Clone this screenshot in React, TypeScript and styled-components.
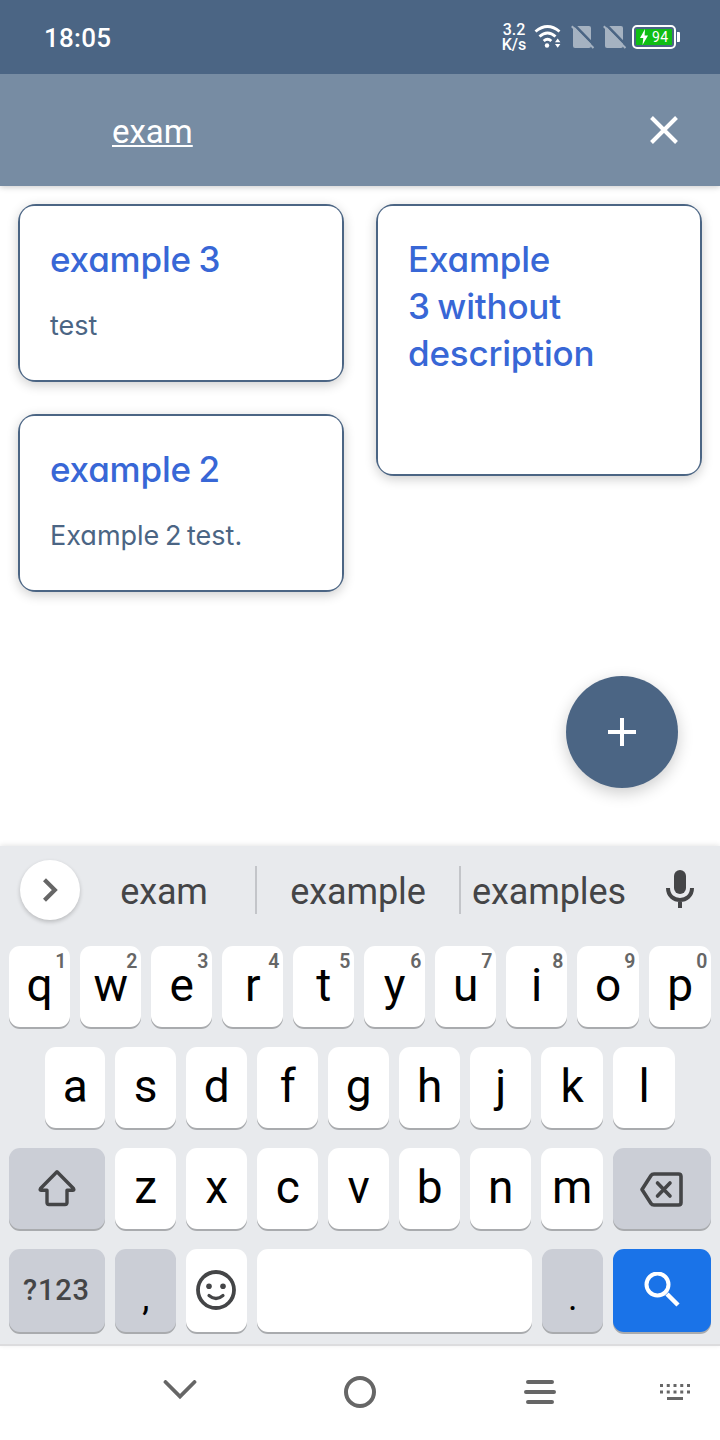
import React from "react";
import styled, { createGlobalStyle } from "styled-components";

const color = {
  slate: "#4b6584",
  bar: "#778ca3",
  title: "#3867d6",
  board: "#e8eaed",
  special: "#cbced6",
  icon: "#444547",
  nav: "#666666",
  enter: "#1a73e8",
};

const Global = createGlobalStyle`
  * { box-sizing: border-box; }
  body { margin: 0; background: #fff; }
`;

const Screen = styled.div`
  width: 720px;
  height: 1440px;
  display: flex;
  flex-direction: column;
  overflow: hidden;
  background: #fff;
  font-family: Roboto, sans-serif;
  svg { display: block; flex: none; }
`;

const StatusBar = styled.header`
  position: relative;
  z-index: 2;
  height: 74px;
  flex: none;
  display: flex;
  align-items: center;
  justify-content: space-between;
  padding: 0 40px 0 44px;
  background: ${color.slate};
  color: #fff;
`;
const Clock = styled.span`
  font-size: 26px;
  font-weight: 500;
  line-height: 30px;
  letter-spacing: 0.25px;
  padding-top: 2px;
`;
const StatusIcons = styled.div`
  display: flex;
  align-items: center;
`;
const Speed = styled.div`
  width: 26px;
  margin-right: 7px;
  padding-top: 1px;
  font-size: 16px;
  font-weight: 500;
  line-height: 14.5px;
  text-align: center;
  white-space: nowrap;
`;
const Battery = styled.div`
  position: relative;
  width: 44px;
  height: 24px;
  margin-right: 4px;
  border: 2px solid #fff;
  border-radius: 5px;
  padding: 2px;
  &::after {
    content: "";
    position: absolute;
    right: -6px;
    top: 5px;
    width: 3px;
    height: 10px;
    background: #fff;
    border-radius: 0 1px 1px 0;
  }
`;
const Charge = styled.div`
  height: 16px;
  display: flex;
  align-items: center;
  gap: 3px;
  padding-left: 3px;
  background: #0fbe14;
  font-size: 14px;
  line-height: 18px;
  letter-spacing: 0.5px;
`;

const SearchBar = styled.div`
  position: relative;
  z-index: 1;
  height: 112px;
  flex: none;
  display: flex;
  align-items: center;
  justify-content: space-between;
  padding: 0 41px 0 112px;
  background: ${color.bar};
  box-shadow: 0 1px 6px rgba(0, 0, 0, 0.22);
`;
const Query = styled.span`
  color: #fff;
  font-size: 33px;
  line-height: 36px;
  padding-top: 3px;
  text-decoration: underline;
  text-decoration-thickness: 2px;
  text-underline-offset: 2px;
  text-decoration-skip-ink: none;
`;

const Notes = styled.main`
  position: relative;
  height: 660px;
  flex: none;
  display: grid;
  grid-template-columns: 326px 326px;
  column-gap: 32px;
  align-items: start;
  padding: 18px;
`;
const Column = styled.div`
  display: grid;
  row-gap: 32px;
`;
const CardFrame = styled.article<{ $height: number }>`
  height: ${(p) => p.$height}px;
  padding: 2px;
  border-radius: 18px;
  background: ${color.slate};
  box-shadow: 0 3px 12px rgba(0, 0, 0, 0.2);
`;
const CardBody = styled.div`
  height: 100%;
  padding: 30px;
  border-radius: 14px;
  background: #fff;
  font-family: Inter, sans-serif;
  font-feature-settings: "cv11" 1;
`;
const CardTitle = styled.h2`
  margin: 0;
  color: ${color.title};
  font-size: 35px;
  font-weight: 500;
  line-height: 47px;
  letter-spacing: -0.2px;
  word-spacing: -1.5px;
  white-space: pre-line;
`;
const CardText = styled.p`
  margin: 25px 0 0;
  color: ${color.slate};
  font-size: 27px;
  font-weight: 400;
  line-height: 36px;
  word-spacing: -2px;
`;
const Fab = styled.button`
  position: absolute;
  right: 42px;
  bottom: 58px;
  width: 112px;
  height: 112px;
  padding: 0;
  display: grid;
  place-items: center;
  border: 0;
  border-radius: 50%;
  background: ${color.slate};
  box-shadow: 0 5px 16px rgba(0, 0, 0, 0.2);
`;

const Keyboard = styled.section`
  position: relative;
  height: 500px;
  flex: none;
  background: ${color.board};
  border-bottom: 2px solid #dcdcde;
  box-shadow: 0 -1px 5px rgba(0, 0, 0, 0.1);
`;
const Suggestions = styled.div`
  height: 100px;
  display: flex;
  padding: 14px 20px 0;
`;
const Expand = styled.button`
  width: 60px;
  height: 60px;
  padding: 0;
  display: grid;
  place-items: center;
  border: 0;
  border-radius: 50%;
  background: #fff;
  box-shadow: 0 2px 4px rgba(0, 0, 0, 0.2);
`;
const Word = styled.span<{ $width: number }>`
  width: ${(p) => p.$width}px;
  text-align: center;
  color: ${color.icon};
  font-size: 36px;
  line-height: 64px;
  letter-spacing: -0.1px;
`;
const Divider = styled.i<{ $gap?: number }>`
  width: 2px;
  height: 48px;
  margin: 6px 0 0 ${(p) => p.$gap ?? 0}px;
  background: #c3c5c9;
`;
const Mic = styled.div`
  margin: 9px 0 0 28px;
`;
const Rows = styled.div`
  display: grid;
  row-gap: 20px;
`;
const KeyRow = styled.div<{ $inset?: number }>`
  display: flex;
  gap: 10px;
  padding-left: ${(p) => p.$inset ?? 9}px;
`;
const Key = styled.button<{ $width: number; $tone?: string; $tall?: boolean }>`
  position: relative;
  flex: none;
  width: ${(p) => p.$width}px;
  height: ${(p) => (p.$tall ? 83 : 81)}px;
  padding: 0 0 4px 0.4px;
  display: flex;
  align-items: center;
  justify-content: center;
  border: 0;
  border-radius: 11px;
  background: ${(p) => p.$tone ?? "#fff"};
  box-shadow: 0 2px 0 #a9abae;
  color: #000;
  font: 400 46px/1 Roboto, sans-serif;
`;
const IconKey = styled(Key)`
  padding: 0 1px 2px 0;
`;
const Hint = styled.sup`
  position: absolute;
  top: 6px;
  right: 3.5px;
  color: #666;
  font-size: 19.5px;
  font-weight: 600;
  line-height: 20px;
`;
const ModeLabel = styled.span`
  padding-top: 2px;
  color: ${color.icon};
  font-size: 29px;
  font-weight: 500;
  letter-spacing: 0.8px;
`;
const Punctuation = styled.span`
  padding-top: 18px;
  font-size: 36px;
`;

const NavBar = styled.nav`
  height: 94px;
  flex: none;
  display: grid;
  grid-template-columns: 90px 180px 180px 180px 90px;
  justify-items: center;
  align-items: center;
  padding-bottom: 2px;
`;
const HideKeyboard = styled.div`
  padding-bottom: 2px;
`;

const NoSim = () => (
  <svg width="24" height="24" viewBox="0 0 24 24">
    <path d="M5 1H18Q20 1 20 3V21Q20 23 18 23H4Q2 23 2 21V4Z" fill="#a5b2c1" />
    <path d="M2.500-1L24 21" stroke={color.slate} strokeWidth="2.600" />
    <path d="M.8 1.200L22.500 23" stroke="#a5b2c1" strokeWidth="2" />
  </svg>
);

type Note = { title: string; text?: string; height: number };
const columns: Note[][] = [
  [
    { title: "example 3", text: "test", height: 178 },
    { title: "example 2", text: "Example 2 test.", height: 178 },
  ],
  [{ title: "Example\n3 without\ndescription", height: 272 }],
];

const NoteCard = ({ title, text, height }: Note) => (
  <CardFrame $height={height}>
    <CardBody>
      <CardTitle>{title}</CardTitle>
      {text && <CardText>{text}</CardText>}
    </CardBody>
  </CardFrame>
);

export default function App() {
  return (
    <Screen>
      <Global />
      <StatusBar>
        <Clock>18:05</Clock>
        <StatusIcons>
          <Speed>3.2<br />K/s</Speed>
          <svg width="28" height="26" viewBox="0 0 28 26" fill="none" stroke="#fff" strokeWidth="2.900">
            <path d="M1.500 7.500Q13.500-2.500 25.500 7.500M5.500 12.500Q13.500 5.500 21.500 12.500M9.700 17Q13.500 13.500 17.300 17" />
            <circle cx="13" cy="21.500" r="2.200" fill="#fff" stroke="none" />
            <path d="M21 18.300L23.700 14.500L26.400 18.300ZM21 20L23.700 23.800L26.400 20Z" fill="#fff" stroke="none" />
          </svg>
          <svg width="9" height="24" />
          <NoSim />
          <svg width="8" height="24" />
          <NoSim />
          <svg width="5" height="24" />
          <Battery>
            <Charge>
              <svg width="10" height="16" viewBox="0 0 10 16"><path d="M6 0L1 9H4.300L3.500 16L9 6.500H5.600Z" fill="#fff" /></svg>
              94
            </Charge>
          </Battery>
        </StatusIcons>
      </StatusBar>
      <SearchBar>
        <Query>exam</Query>
        <svg width="30" height="30" viewBox="0 0 30 30"><path d="M2.500 2.500L27.500 27.500M27.500 2.500L2.500 27.500" stroke="#fff" strokeWidth="4" /></svg>
      </SearchBar>
      <Notes>
        {columns.map((notes, i) => (
          <Column key={i}>
            {notes.map((n) => <NoteCard key={n.title} {...n} />)}
          </Column>
        ))}
        <Fab aria-label="Add note">
          <svg width="28" height="28" viewBox="0 0 28 28"><path d="M14 0V28M0 14H28" stroke="#fff" strokeWidth="4" /></svg>
        </Fab>
      </Notes>
      <Keyboard>
        <Suggestions>
          <Expand aria-label="Expand">
            <svg width="18" height="24" viewBox="0 0 18 24"><path d="M3.500 1.700L13.800 12L3.500 22.300" fill="none" stroke="#666" strokeWidth="4.200" /></svg>
          </Expand>
          <Word $width={168}>exam</Word>
          <Divider $gap={7} />
          <Word $width={202}>example</Word>
          <Divider />
          <Word $width={176}>examples</Word>
          <Mic>
            <svg width="30" height="40" viewBox="0 0 30 40">
              <rect x="9" y="1" width="12" height="24" rx="6" fill={color.icon} />
              <path d="M3 19C3 35 27 35 27 19M15 31V39" fill="none" stroke={color.icon} strokeWidth="4" />
            </svg>
          </Mic>
        </Suggestions>
        <Rows>
          <KeyRow>
            {[..."qwertyuiop"].map((c, i) => (
              <Key key={c} $width={i > 7 ? 62 : 61}>{c}<Hint>{(i + 1) % 10}</Hint></Key>
            ))}
          </KeyRow>
          <KeyRow $inset={45}>
            {[..."asdfghjkl"].map((c, i) => (
              <Key key={c} $width={i === 0 ? 60 : i > 6 ? 62 : 61}>{c}</Key>
            ))}
          </KeyRow>
          <KeyRow>
            <IconKey $width={96} $tone={color.special} aria-label="Shift">
              <svg width="40" height="38" viewBox="0 0 40 38"><path d="M20 2.800L36.500 19.500Q37.500 21.200 36 21.200H30V33.500Q30 35.500 28 35.500H12Q10 35.500 10 33.500V21.200H4Q2.500 21.200 3.500 19.500Z" fill="none" stroke={color.icon} strokeWidth="3.400" strokeLinejoin="round" /></svg>
            </IconKey>
            {[..."zxcvbnm"].map((c, i) => <Key key={c} $width={i === 6 ? 62 : 61}>{c}</Key>)}
            <IconKey $width={98} $tone={color.special} aria-label="Backspace">
              <svg width="44" height="38" viewBox="0.5 -2.5 44 38" fill="none" stroke={color.icon} strokeWidth="3.600" strokeLinejoin="round">
                <path d="M14.500 2.500H39Q41.500 2.500 41.500 5V31Q41.500 33.500 39 33.500H14.500Q12.500 33.500 11.500 32L2.500 18L11.500 4Q12.500 2.500 14.500 2.500Z" />
                <path d="M18 11.500L30.500 24.500M30.500 11.500L18 24.500" strokeLinecap="round" />
              </svg>
            </IconKey>
          </KeyRow>
          <KeyRow>
            <IconKey $width={96} $tall $tone={color.special}><ModeLabel>?123</ModeLabel></IconKey>
            <Key $width={61} $tall $tone={color.special}><Punctuation>,</Punctuation></Key>
            <IconKey $width={61} $tall aria-label="Emoji">
              <svg width="40" height="40" viewBox="0 0 40 40">
                <circle cx="20" cy="20" r="18" fill="none" stroke={color.icon} strokeWidth="3.800" />
                <circle cx="13" cy="16.300" r="2.800" fill={color.icon} />
                <circle cx="27" cy="16.300" r="2.800" fill={color.icon} />
                <path d="M13 25.500Q20 31.500 27 25.500" fill="none" stroke={color.icon} strokeWidth="3.200" strokeLinecap="round" />
              </svg>
            </IconKey>
            <Key $width={275} $tall aria-label="Space" />
            <Key $width={61} $tall $tone={color.special}><Punctuation>.</Punctuation></Key>
            <IconKey $width={98} $tall $tone={color.enter} aria-label="Search">
              <svg width="36" height="36" viewBox="0 0 36 36" fill="none" stroke="#fff" strokeWidth="4">
                <circle cx="13.500" cy="12.500" r="11" />
                <path d="M23 22L34 33" strokeWidth="4.500" />
              </svg>
            </IconKey>
          </KeyRow>
        </Rows>
      </Keyboard>
      <NavBar>
        <i />
        <svg width="34" height="24" viewBox="0 0 34 24"><path d="M2.500 2L17 16.500L31.500 2" fill="none" stroke={color.nav} strokeWidth="3.800" strokeLinecap="round" /></svg>
        <svg width="34" height="34" viewBox="0 0 34 34"><circle cx="17" cy="17" r="14" fill="none" stroke={color.nav} strokeWidth="4" /></svg>
        <svg width="34" height="26" viewBox="0 0 34 26"><path d="M5 3H29M3 13H31M5 23H29" stroke={color.nav} strokeWidth="4" strokeLinecap="round" /></svg>
        <HideKeyboard>
          <svg width="30" height="18" viewBox="0 0 30 18" stroke={color.nav} strokeWidth="3">
            <path d="M0 3.500H30M0 10H30" strokeDasharray="3 3.750" />
            <path d="M7 16.500H23" />
          </svg>
        </HideKeyboard>
      </NavBar>
    </Screen>
  );
}
